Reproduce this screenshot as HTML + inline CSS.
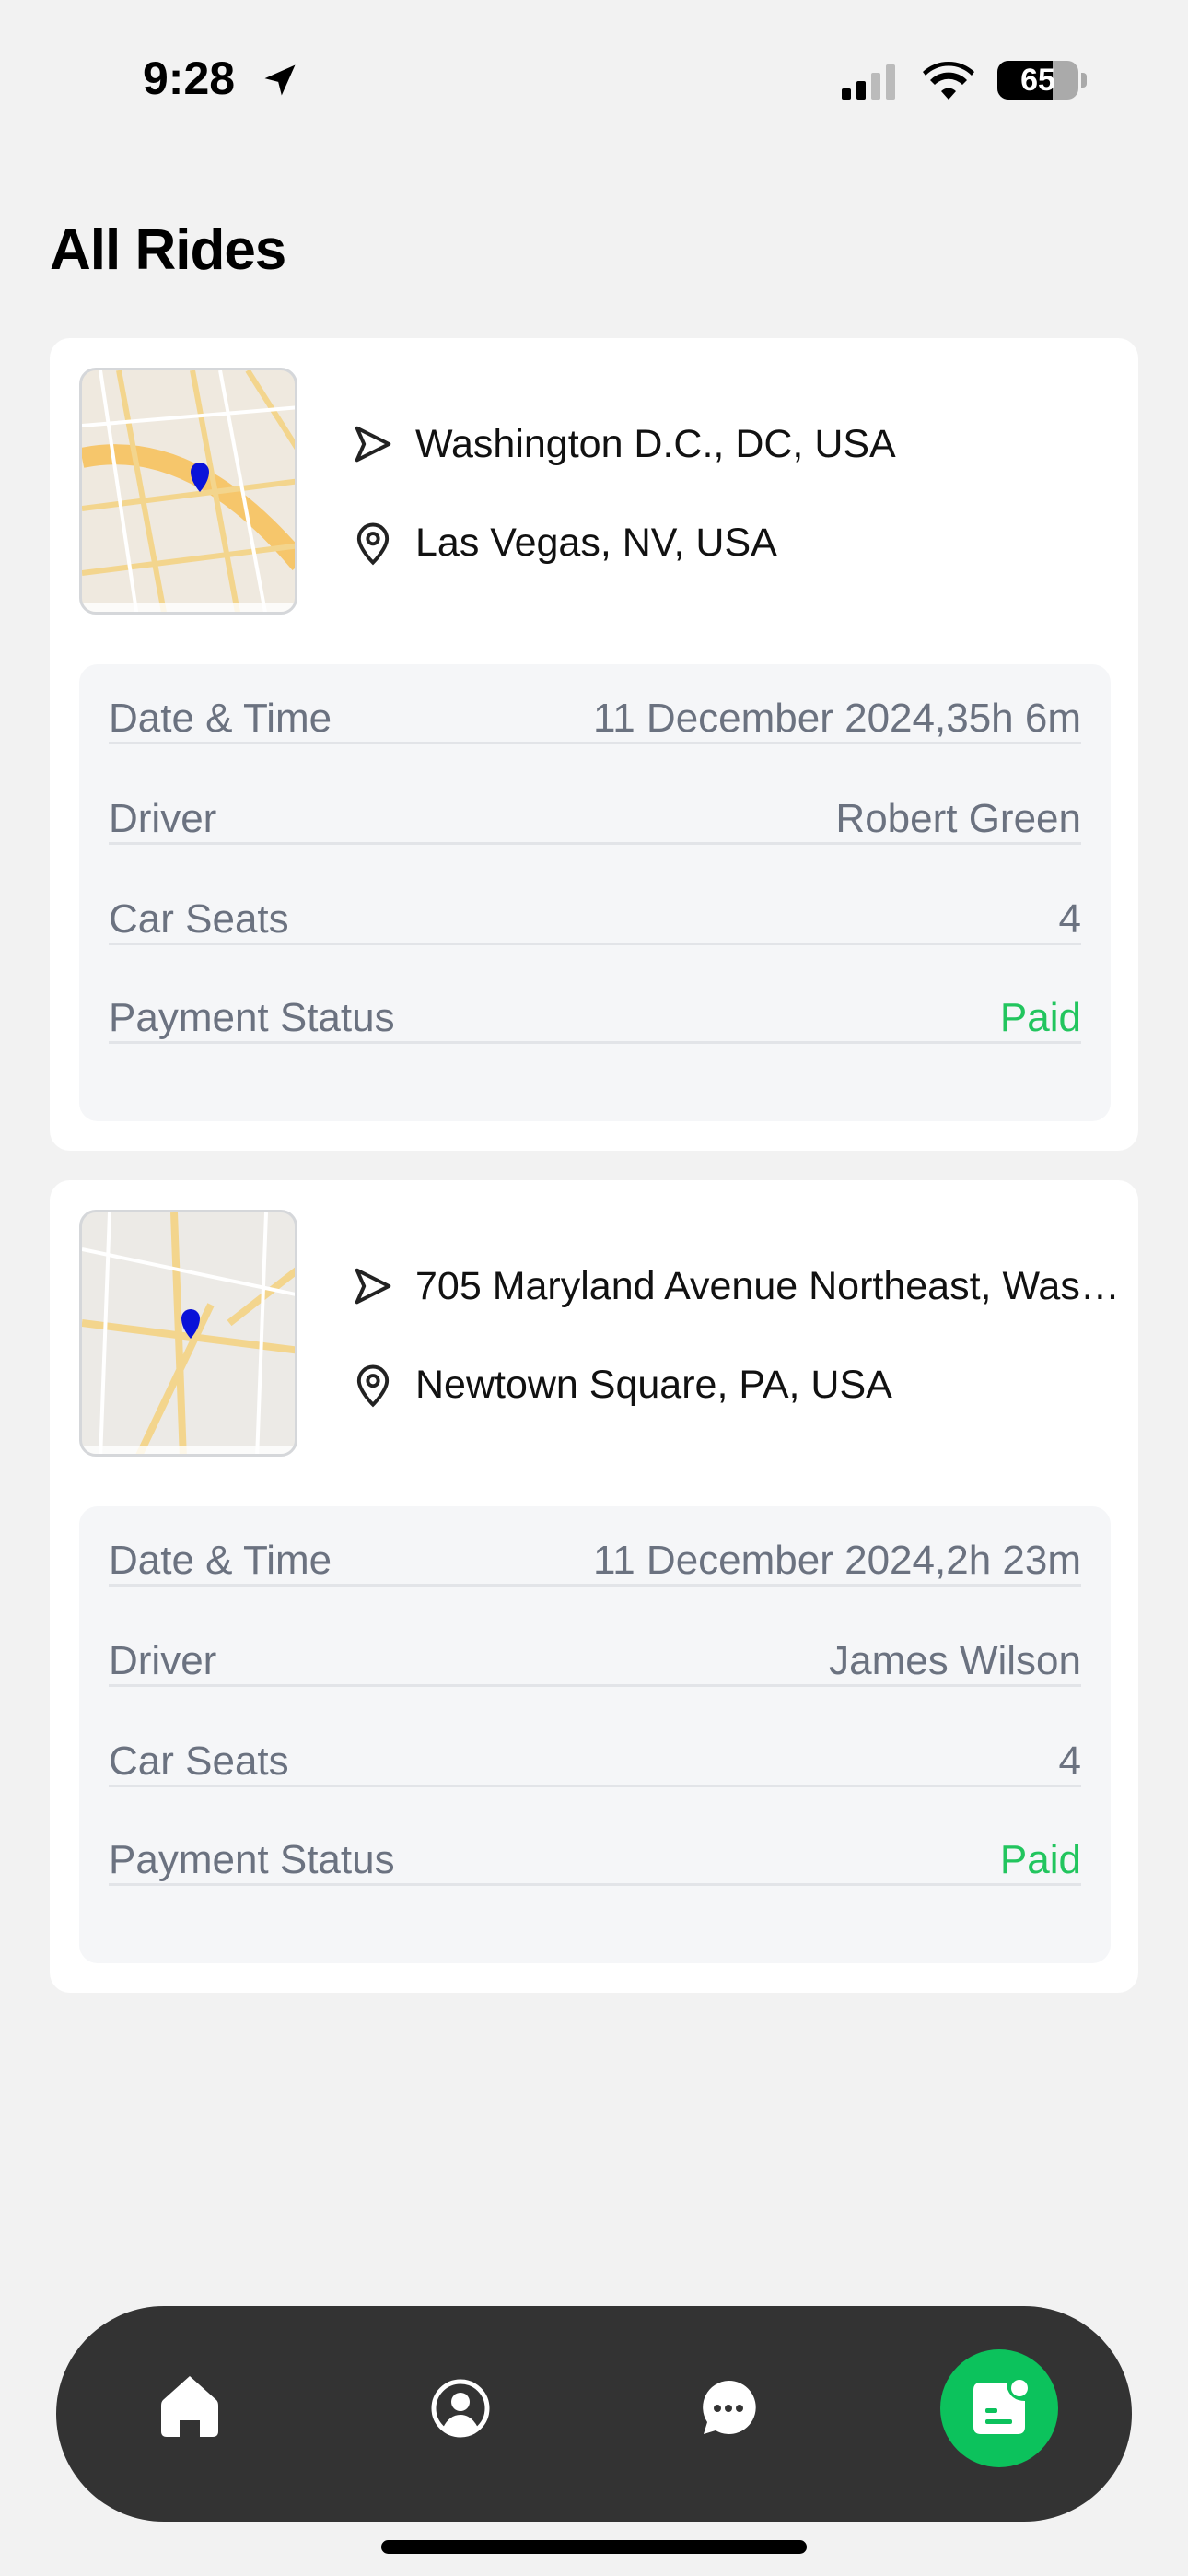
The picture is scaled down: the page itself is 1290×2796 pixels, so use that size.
<!DOCTYPE html>
<html><head><meta charset="utf-8"><style>
*{margin:0;padding:0;box-sizing:border-box}
body{width:1290px;height:2796px;background:#f2f2f2;font-family:"Liberation Sans",sans-serif;position:relative;overflow:hidden}
.abs{position:absolute}
.card{position:absolute;left:54px;width:1182px;height:882px;background:#fff;border-radius:22px}
.map{position:absolute;left:32px;top:32px;width:237px;height:268px;border-radius:18px;border:3px solid #d5d7da;overflow:hidden;background:#efe9df}
.loc{position:absolute;left:325px;font-size:43px;color:#111;white-space:nowrap;display:flex;align-items:center}
.loc svg{position:absolute;left:0}
.loc span{position:absolute;left:72px;width:780px;overflow:hidden;text-overflow:ellipsis}
.box{position:absolute;left:32px;top:354px;width:1120px;height:496px;background:#f5f6f8;border-radius:20px}
.row{position:absolute;left:32px;width:1056px;height:54px;border-bottom:3px solid #e2e4e8;font-size:44px;color:#6b7280;display:flex;justify-content:space-between;align-items:flex-end;padding-bottom:0}
.paid{color:#22c55e}
</style></head><body>
<div class="abs" style="left:155px;top:56px;font-size:50px;font-weight:bold;color:#000">9:28</div>
<svg class="abs" style="left:282px;top:65px" width="44" height="44" viewBox="0 0 24 24"><path d="M21 3L3 11l8 2 2 8z" fill="#000"/></svg>
<svg class="abs" style="left:912px;top:68px" width="70" height="40" viewBox="0 0 70 40"><rect x="2" y="28" width="10" height="12" rx="2" fill="#000"/><rect x="18" y="20" width="10" height="20" rx="2" fill="#000"/><rect x="34" y="11" width="10" height="29" rx="2" fill="#bbb"/><rect x="50" y="2" width="10" height="38" rx="2" fill="#bbb"/></svg>
<svg class="abs" style="left:1002px;top:66px" width="56" height="42" viewBox="0 0 56 42"><path d="M28 42l-8-9a11 11 0 0 1 16 0zM13 26a21 21 0 0 1 30 0l5-5a28 28 0 0 0-40 0zM3 16a35 35 0 0 1 50 0l3-4a41 41 0 0 0-56 0z" fill="#000"/></svg>
<div class="abs" style="left:1083px;top:66px;width:88px;height:42px;border-radius:12px;background:#aaa;overflow:hidden"><div style="width:60px;height:42px;background:#000"></div><div class="abs" style="left:0;top:0;width:88px;text-align:center;font-size:34px;font-weight:bold;color:#fff;line-height:42px">65</div></div>
<div class="abs" style="left:1174px;top:79px;width:6px;height:16px;border-radius:0 4px 4px 0;background:#aaa"></div>
<div class="abs" style="left:54px;top:236px;font-size:62px;font-weight:bold;color:#000;letter-spacing:-1px">All Rides</div>

<div class="card" style="top:367px">
<div class="map"><svg width="237" height="268"><path d="M0 95 Q120 70 237 210" stroke="#f6c66b" stroke-width="22" fill="none"/><path d="M40 0 L90 268 M120 0 L170 268 M0 150 L237 120 M0 220 L237 190 M180 0 L237 90" stroke="#f3d58d" stroke-width="6" fill="none"/><path d="M20 0 L60 268 M150 0 L200 268 M0 60 L237 40" stroke="#fff" stroke-width="4" fill="none"/><path d="M118 110 a10 10 0 0 1 20 0 q0 10 -10 22 q-10 -12 -10 -22z" fill="#0a12d8"/><rect x="0" y="253" width="237" height="15" fill="#fff" opacity=".8"/></svg></div>
<div class="loc" style="top:88px;height:54px"><svg width="52" height="52" viewBox="0 0 24 24"><path d="M4 4l16 8-16 8 3.5-8z" fill="none" stroke="#222" stroke-width="1.8" stroke-linejoin="round"/></svg><span>Washington D.C., DC, USA</span></div>
<div class="loc" style="top:195px;height:54px"><svg width="52" height="52" viewBox="0 0 24 24"><path d="M12 22s7-7 7-12a7 7 0 0 0-14 0c0 5 7 12 7 12z" fill="none" stroke="#222" stroke-width="1.8"/><circle cx="12" cy="10" r="2.6" fill="none" stroke="#222" stroke-width="1.8"/></svg><span>Las Vegas, NV, USA</span></div>
<div class="box">
<div class="row" style="top:33px"><span>Date &amp; Time</span><span>11 December 2024,35h 6m</span></div>
<div class="row" style="top:142px"><span>Driver</span><span>Robert Green</span></div>
<div class="row" style="top:251px"><span>Car Seats</span><span>4</span></div>
<div class="row" style="top:358px"><span>Payment Status</span><span class="paid">Paid</span></div>
</div></div>

<div class="card" style="top:1281px">
<div class="map" style="background:#eceae6"><svg width="237" height="268"><path d="M0 120 L237 150 M100 0 L110 268 M60 268 L140 100 M160 120 L237 60" stroke="#f3d58d" stroke-width="8" fill="none"/><path d="M0 40 L237 90 M30 0 L20 268 M200 0 L190 268" stroke="#fff" stroke-width="4" fill="none"/><path d="M108 115 a10 10 0 0 1 20 0 q0 10 -10 22 q-10 -12 -10 -22z" fill="#0a12d8"/><rect x="0" y="253" width="237" height="15" fill="#fff" opacity=".8"/></svg></div>
<div class="loc" style="top:88px;height:54px"><svg width="52" height="52" viewBox="0 0 24 24"><path d="M4 4l16 8-16 8 3.5-8z" fill="none" stroke="#222" stroke-width="1.8" stroke-linejoin="round"/></svg><span>705 Maryland Avenue Northeast, Washington</span></div>
<div class="loc" style="top:195px;height:54px"><svg width="52" height="52" viewBox="0 0 24 24"><path d="M12 22s7-7 7-12a7 7 0 0 0-14 0c0 5 7 12 7 12z" fill="none" stroke="#222" stroke-width="1.8"/><circle cx="12" cy="10" r="2.6" fill="none" stroke="#222" stroke-width="1.8"/></svg><span>Newtown Square, PA, USA</span></div>
<div class="box">
<div class="row" style="top:33px"><span>Date &amp; Time</span><span>11 December 2024,2h 23m</span></div>
<div class="row" style="top:142px"><span>Driver</span><span>James Wilson</span></div>
<div class="row" style="top:251px"><span>Car Seats</span><span>4</span></div>
<div class="row" style="top:358px"><span>Payment Status</span><span class="paid">Paid</span></div>
</div></div>

<div class="abs" style="left:61px;top:2503px;width:1168px;height:234px;border-radius:117px;background:#333"></div>
<svg class="abs" style="left:173px;top:2577px" width="66" height="70" viewBox="0 0 66 70"><path d="M33 2 L62 28 Q64 30 64 34 V62 Q64 68 58 68 H44 V50 H22 V68 H8 Q2 68 2 62 V34 Q2 30 4 28Z" fill="#fff"/></svg>
<svg class="abs" style="left:468px;top:2582px" width="64" height="64" viewBox="0 0 64 64"><circle cx="32" cy="32" r="29" fill="none" stroke="#fff" stroke-width="5"/><circle cx="32" cy="25" r="10" fill="#fff"/><path d="M13 53 Q20 39 32 39 Q44 39 51 53 Q42 61 32 61 Q22 61 13 53z" fill="#fff"/></svg>
<svg class="abs" style="left:760px;top:2582px" width="62" height="64" viewBox="0 0 62 64"><path d="M31 2 A29 29 0 1 1 17 56 L4 60 L8 47 A29 29 0 0 1 31 2z" fill="#fff"/><circle cx="19" cy="32" r="4" fill="#333"/><circle cx="31" cy="32" r="4" fill="#333"/><circle cx="43" cy="32" r="4" fill="#333"/></svg>
<div class="abs" style="left:1021px;top:2550px;width:128px;height:128px;border-radius:50%;background:#0cc25c"></div>
<svg class="abs" style="left:1053px;top:2580px" width="66" height="66" viewBox="0 0 66 66"><path d="M40 6 H12 Q4 6 4 14 V54 Q4 62 12 62 H52 Q60 62 60 54 V26 Q44 26 40 10z" fill="#fff"/><circle cx="54" cy="12" r="9" fill="#fff"/><rect x="17" y="34" width="13" height="5" rx="2" fill="#0cc25c"/><rect x="17" y="46" width="29" height="5" rx="2" fill="#0cc25c"/></svg>
<div class="abs" style="left:414px;top:2757px;width:462px;height:15px;border-radius:8px;background:#000"></div>
</body></html>
